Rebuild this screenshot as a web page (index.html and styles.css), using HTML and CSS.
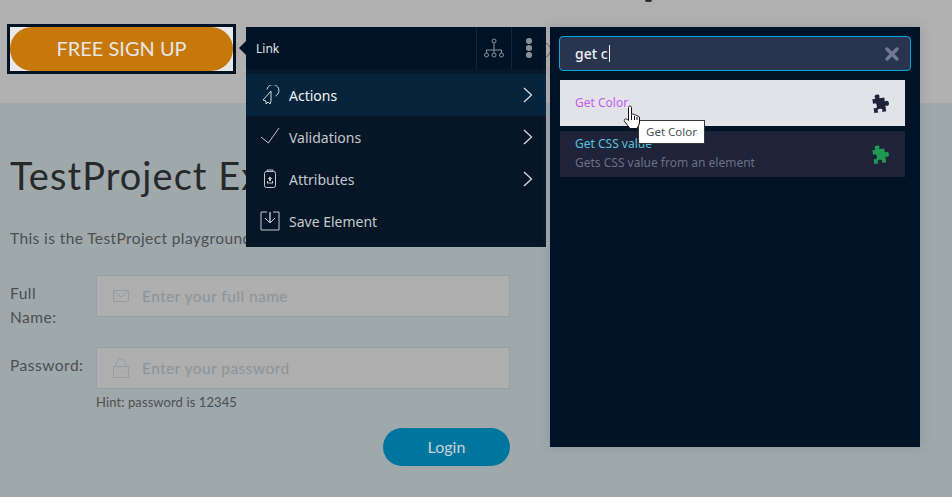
FILE: index.html
```html
<!DOCTYPE html>
<html lang="en">
<head>
    <meta charset="UTF-8">
    <meta name="viewport" content="width=device-width, initial-scale=1.0">
    <title>TestProject Example</title>
    <link rel="stylesheet" href="styles.css">
</head>
<body>
    <svg class="defs" width="0" height="0">
        <symbol id="puzzle" viewBox="2 0 18 20">
            <path transform="rotate(-8 11 10)" d="M3 5H6C6 4 5.500 3.500 5.500 3C5.500 .5 10.500 .5 10.500 3C10.500 3.500 10 4 10 5H15V9C16 9 16.500 8.500 17 8.500C19.500 8.500 19.500 13.500 17 13.500C16.500 13.500 16 13 15 13V19H11C11 18 11.500 17.500 11.500 17C11.500 15 6.500 15 6.500 17C6.500 17.500 7 18 7 19H3V14C4 14 4.500 14.500 5 14.500C7 14.500 7 9.500 5 9.500C4.500 9.500 4 10 3 10Z"/>
        </symbol>
    </svg>
    <div class="header">
        <div class="picked">
            <a class="signup">FREE SIGN UP</a>
        </div>
        <span class="nav-box"><span class="ring"></span></span>
        <span class="clipped"></span>
    </div>
    <div class="content">
        <h1>TestProject Example page</h1>
        <p class="intro">This is the TestProject playground website</p>
        <div class="form-row">
            <label>Full<br>Name:</label>
            <div>
                <div class="field">
                    <svg class="field-icon" viewBox="0 0 16 16"><path d="M.5 2.500h15v11H.5zM.5 3l7.500 6 7.500-6" fill="none" stroke="#959da3"/></svg>
                    <span>Enter your full name</span>
                </div>
            </div>
        </div>
        <div class="form-row">
            <label>Password:</label>
            <div>
                <div class="field">
                    <svg class="field-icon lock" viewBox="0 0 16 20"><path d="M.5 8.500h15v11H.5zM3 8.500V6a5 5 0 0 1 10 0v2.500M4 14h1M7 14h1M10 14h1M13 14h.5" fill="none" stroke="#959da3"/></svg>
                    <span>Enter your password</span>
                </div>
                <div class="hint">Hint: password is 12345</div>
            </div>
        </div>
        <div class="actions"><a class="login">Login</a></div>
    </div>

    <div class="menu">
        <div class="menu-head">
            <span class="menu-title">Link</span>
            <span class="head-btn">
                <svg width="22" height="20" viewBox="0 0 22 20"><g fill="none" stroke="#8b929a"><circle cx="11" cy="3" r="2"/><circle cx="3.500" cy="17" r="2"/><circle cx="11" cy="17" r="2"/><circle cx="18.500" cy="17" r="2"/><path d="M11 5v10M3.500 15v-3h15v3"/></g></svg>
            </span>
            <span class="head-btn dots"><i></i><i></i><i></i></span>
        </div>
        <div class="menu-item active">
            <svg class="item-icon" viewBox="0 0 20 20"><g fill="none" stroke="#d5dade"><path d="M7 4.500A6 6 0 1 1 15.500 11"/><path d="M11 6 3 15l3 1v3l2-2 2 2 1-3z"/></g></svg>
            <span>Actions</span>
            <svg class="chev" viewBox="0 0 10 16"><path d="M1 1l7.500 7L1 15" fill="none" stroke="#d5dade" stroke-width="1.300"/></svg>
        </div>
        <div class="menu-item">
            <svg class="item-icon" viewBox="0 0 20 20"><path d="M1 10l7.300 6L19 1" fill="none" stroke="#c3c8cd"/></svg>
            <span>Validations</span>
            <svg class="chev" viewBox="0 0 10 16"><path d="M1 1l7.500 7L1 15" fill="none" stroke="#d5dade" stroke-width="1.300"/></svg>
        </div>
        <div class="menu-item">
            <svg class="item-icon" viewBox="0 0 20 20"><g fill="none" stroke="#c3c8cd"><rect x="4.500" y="2.500" width="11" height="16" rx="2"/><path d="M7 2.500V1h6v1.500"/></g><path d="M10 7.500l2.500 2.500H11v2H9v-2H7.500zM7 12h1v1.500h4V12h1v2.500H7z" fill="#c3c8cd"/></svg>
            <span>Attributes</span>
            <svg class="chev" viewBox="0 0 10 16"><path d="M1 1l7.500 7L1 15" fill="none" stroke="#d5dade" stroke-width="1.300"/></svg>
        </div>
        <div class="menu-item">
            <svg class="item-icon" viewBox="0 0 20 20"><g fill="none" stroke="#c3c8cd"><path d="M7 1H1v18h18V1h-6"/><path d="M10 1v10" stroke="#8b929a" stroke-width="2"/><path d="M5 7l5 5 5-5"/></g></svg>
            <span>Save Element</span>
        </div>
    </div>

    <div class="search-panel">
        <div class="search-box">
            <span class="search-text">get c</span>
            <svg class="clear" viewBox="0 0 14 14"><path d="M2 2l10 10M12 2L2 12" stroke="#717a96" stroke-width="3.400" stroke-linecap="round"/></svg>
        </div>
        <div class="result hovered">
            <div class="result-text"><div class="result-name">Get Color</div></div>
            <svg class="puzzle"><use href="#puzzle"/></svg>
        </div>
        <div class="result">
            <div class="result-text">
                <div class="result-name">Get CSS value</div>
                <div class="result-desc">Gets CSS value from an element</div>
            </div>
            <svg class="puzzle"><use href="#puzzle"/></svg>
        </div>
    </div>

    <div class="tooltip">Get Color</div>
    <svg class="hand" viewBox="0 0 18 25"><path d="M5.500 2.500c0-2 3-2 3 0v7c1-1 2.500-.5 3 .5 1-.5 2.200 0 2.500 1 1-.3 2.500.3 2.500 2v4c0 3-1.500 5-3 6.500H7c-1.500-2-3-4-5-6.500-1.500-1.800-.5-3.500 1.500-3l2 1.500z" fill="#fff" stroke="#111" stroke-width="1"/><path d="M8.500 10v5M11.500 11v4M14 12v3" stroke="#111" fill="none"/></svg>
</body>
</html>
```

FILE: styles.css
```css
html, body {
    height: 100%;
}
body {
    font-family: Lato, "Noto Sans", sans-serif;
    margin: 0;
    background-color: #9fa8ab;
    color: #4b5053;
    overflow: hidden;
}
.defs {
    position: absolute;
}
.header {
    height: 103px;
    background-color: #b0b0b0;
    box-sizing: border-box;
    padding: 24px 0 0 7px;
    display: flex;
    align-items: flex-start;
}
.picked {
    width: 229px;
    height: 50px;
    box-sizing: border-box;
    border: 3px solid #001226;
    background-color: #e9e9e9;
}
.signup {
    display: block;
    height: 44px;
    line-height: 43px;
    border-radius: 22px;
    background-color: #c6780a;
    color: #e6e6e6;
    text-align: center;
    font-size: 20px;
}
.nav-box {
    position: absolute;
    left: 500px;
    top: 31px;
    width: 60px;
    height: 36px;
    border-top: 1px solid #a5a5a5;
    border-bottom: 1px solid #a5a5a5;
}
.ring {
    position: absolute;
    left: 35px;
    top: 10px;
    width: 14px;
    height: 14px;
    border: 1px solid #5f6366;
    border-radius: 50%;
}
.clipped {
    position: absolute;
    left: 645px;
    top: 0;
    width: 7px;
    height: 2px;
    border-radius: 0 0 4px 4px;
    background-color: #2b2b3a;
}
.content {
    padding: 0 10px;
}
h1 {
    margin: 48px 0 0;
    height: 48px;
    line-height: 48px;
    font-size: 38px;
    font-weight: 400;
    letter-spacing: 1.050px;
    color: #26282b;
    white-space: nowrap;
}
.intro {
    margin: 29px 0 0;
    height: 20px;
    line-height: 20px;
    font-size: 15.500px;
    letter-spacing: 0.400px;
    white-space: nowrap;
}
.form-row {
    display: flex;
    width: 500px;
    margin-bottom: 18px;
}
.intro + .form-row {
    margin-top: 27px;
}
.form-row label {
    width: 86px;
    flex: none;
    font-size: 15.500px;
    letter-spacing: 0.500px;
    line-height: 24px;
    padding-top: 6px;
}
.form-row > div {
    flex: 1;
}
.field {
    height: 42px;
    box-sizing: border-box;
    border: 1px solid #96a0ad;
    background-color: #aeaeae;
    display: flex;
    align-items: center;
    padding: 0 0 1px 16px;
    color: #8d9499;
    font-size: 15.500px;
    letter-spacing: 0.450px;
}
.field-icon {
    width: 16px;
    height: 16px;
    margin-right: 13px;
    flex: none;
}
.field-icon.lock {
    height: 20px;
}
.hint {
    margin-top: 4px;
    font-size: 13px;
    line-height: 18px;
    letter-spacing: 0.100px;
}
.form-row:has(.hint) {
    margin-bottom: 17px;
}
.actions {
    width: 500px;
    display: flex;
    justify-content: flex-end;
}
.login {
    width: 127px;
    height: 38px;
    line-height: 37px;
    text-align: center;
    border-radius: 19px;
    background-color: #00769f;
    color: #c9d3d8;
    font-size: 16px;
}

/* element menu */
.menu {
    position: absolute;
    left: 246px;
    top: 27px;
    width: 300px;
    height: 220px;
    background-color: #071626;
    font-family: "Noto Sans", sans-serif;
    color: #c3c8cd;
    font-size: 14px;
}
.menu::before {
    content: "";
    position: absolute;
    left: -7px;
    top: 14px;
    border-style: solid;
    border-width: 7px 7px 7px 0;
    border-color: transparent #001226 transparent transparent;
}
.menu-head {
    height: 42px;
    margin-bottom: 5px;
    background-color: #001226;
    box-shadow: 0 5px 0 #04192c;
    display: flex;
    align-items: center;
}
.menu-title {
    flex: 1;
    padding-left: 10px;
    font-size: 12px;
    color: #e2e5e8;
}
.head-btn {
    width: 35px;
    height: 42px;
    box-sizing: border-box;
    border-left: 1px solid #14263a;
    display: flex;
    align-items: center;
    justify-content: center;
}
.dots {
    flex-direction: column;
    gap: 1.500px;
}
.dots i {
    width: 5.500px;
    height: 5.500px;
    border-radius: 50%;
    background-color: #8a8f94;
}
.menu-item {
    height: 42px;
    display: flex;
    align-items: center;
    padding: 0 13px 0 14px;
}
.menu-item.active {
    background-color: #05243c;
    color: #f2f4f6;
}
.menu-item span {
    flex: 1;
}
.item-icon {
    width: 20px;
    height: 20px;
    margin-right: 9px;
    flex: none;
}
.chev {
    width: 10px;
    height: 16px;
}

/* step search */
.search-panel {
    position: absolute;
    left: 550px;
    top: 27px;
    width: 370px;
    height: 420px;
    box-sizing: border-box;
    padding: 9px 9px 0 10px;
    background-color: #001226;
    box-shadow: 0 0 10px rgba(100, 100, 120, 0.25);
    font-family: "Noto Sans", sans-serif;
}
.search-box {
    height: 35px;
    margin: 0 0 9px -1px;
    box-sizing: border-box;
    border: 1px solid #00a8e0;
    border-radius: 4px;
    background-color: #29354f;
    display: flex;
    align-items: center;
    justify-content: space-between;
    padding: 0 11px 0 15px;
}
.search-text {
    color: #eef0f3;
    font-size: 14px;
    font-weight: 500;
    padding-right: 1px;
    border-right: 1px solid #eef0f3;
    line-height: 17px;
}
.clear {
    width: 14px;
    height: 14px;
}
.result {
    width: 345px;
    height: 46px;
    margin-bottom: 5px;
    box-sizing: border-box;
    padding: 0 15px;
    background-color: #1e2339;
    display: flex;
    align-items: center;
    justify-content: space-between;
    fill: #1f9a52;
}
.result.hovered {
    background-color: #e2e3e9;
    fill: #1e2339;
}
.result-name {
    font-size: 12px;
    line-height: 18px;
    color: #55c4dc;
}
.hovered .result-name {
    color: #c45cf0;
}
.result-desc {
    font-size: 12px;
    line-height: 20px;
    color: #6b7184;
}
.puzzle {
    width: 18px;
    height: 20px;
}
.tooltip {
    position: absolute;
    left: 638px;
    top: 120px;
    width: 67px;
    height: 24px;
    box-sizing: border-box;
    border: 1px solid #33373c;
    background-color: #fff;
    color: #4b4f55;
    font-family: "Noto Sans", sans-serif;
    font-size: 11.500px;
    line-height: 22px;
    text-align: center;
}
.hand {
    position: absolute;
    left: 623px;
    top: 105px;
    width: 18px;
    height: 25px;
}
```
